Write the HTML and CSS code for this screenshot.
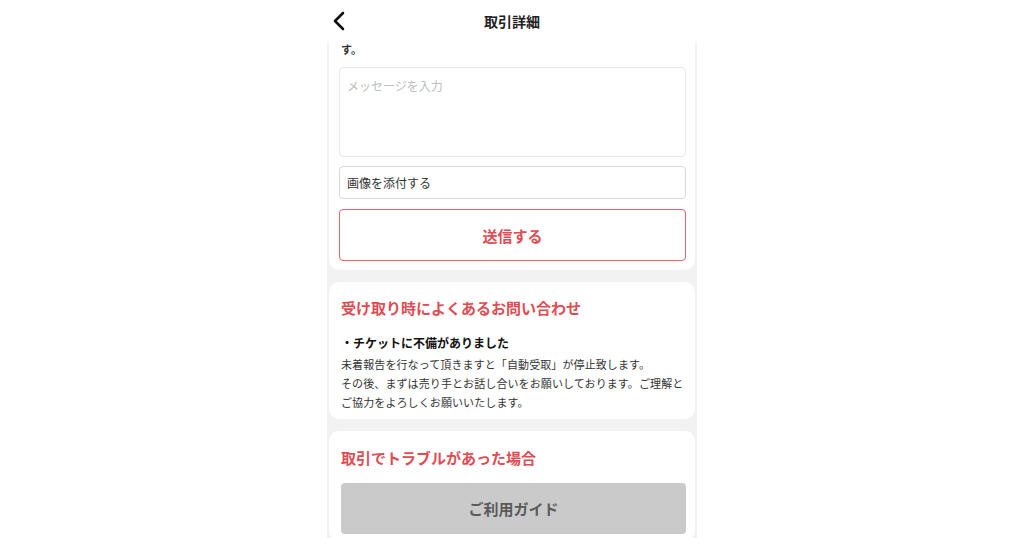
FILE: index.html
```html
<!DOCTYPE html>
<html lang="ja">
<head>
  <meta charset="UTF-8">
  <meta name="viewport" content="width=device-width, initial-scale=1">
  <title>取引詳細</title>
  <link rel="stylesheet" href="styles.css">
</head>
<body>

<div class="screen">
  <div class="header">
    <button type="button" class="back" aria-label="戻る">
      <svg width="14" height="20" viewBox="0 0 14 20"><path d="M11 2 L3 10 L11 18" fill="none" stroke="#111" stroke-width="2.6" stroke-linecap="round" stroke-linejoin="round"/></svg>
    </button>
    <h1>取引詳細</h1>
    <span></span>
  </div>

  <div class="content">
    <div class="card card-top">
      <p class="cut">す。</p>
      <textarea class="message" placeholder="メッセージを入力"></textarea>
      <div class="attach">画像を添付する</div>
      <button type="button" class="send">送信する</button>
    </div>

    <div class="card">
      <h2>受け取り時によくあるお問い合わせ</h2>
      <p class="item">・チケットに不備がありました</p>
      <p class="body">未着報告を行なって頂きますと「自動受取」が停止致します。<br>その後、まずは売り手とお話し合いをお願いしております。ご理解とご協力をよろしくお願いいたします。</p>
    </div>

    <div class="card">
      <h2 class="trouble">取引でトラブルがあった場合</h2>
      <button type="button" class="guide">ご利用ガイド</button>
    </div>
  </div>
</div>

</body>
</html>
```

FILE: styles.css
```css
body {
  margin: 0;
  background: #fff;
  font-family: "Noto Sans CJK JP", "Noto Sans", sans-serif;
  color: #222;
  overflow: hidden;
}
.screen {
  width: 370px;
  margin: 0 auto;
  height: 538px;
  display: flex;
  flex-direction: column;
}
.header {
  height: 42px;
  flex: none;
  display: grid;
  grid-template-columns: 40px 1fr 40px;
  align-items: center;
  background: #fff;
}
.back {
  border: none;
  background: none;
  padding: 0 0 0 5px;
  margin-top: -1px;
  height: 20px;
  display: flex;
  align-items: center;
  cursor: pointer;
}
.header h1 {
  margin: 0;
  text-align: center;
  font-size: 14px;
  font-weight: bold;
  color: #222;
  margin-top: -1px;
}
.content {
  flex: 1;
  background: #f2f2f2;
  padding: 0 2px;
  overflow: hidden;
}
.card {
  background: #fff;
  border-radius: 10px;
  padding: 16px 9px 7px 12px;
  margin-bottom: 12px;
}
.card-top {
  border-radius: 0 0 10px 10px;
  padding: 0 9px 9px 10px;
}
.cut {
  margin: 0 0 0 2px;
  font-size: 11px;
  line-height: 14px;
  font-weight: bold;
  color: #333;
}
.message {
  display: block;
  box-sizing: border-box;
  width: 100%;
  height: 90px;
  margin-top: 11px;
  padding: 9px 7px;
  border: 1px solid #e8e8e8;
  border-radius: 4px;
  font-family: inherit;
  font-size: 12px;
  resize: none;
  outline: none;
}
.message::placeholder {
  color: #bdbdbd;
}
.attach {
  box-sizing: border-box;
  height: 33px;
  margin-top: 9px;
  padding: 0 7px;
  border: 1px solid #d9d9d9;
  border-radius: 4px;
  display: flex;
  align-items: center;
  font-size: 12px;
  color: #333;
}
.send {
  display: block;
  width: 100%;
  height: 52px;
  margin-top: 10px;
  border: 1.5px solid #e3646a;
  border-radius: 4px;
  background: #fff;
  color: #e04c53;
  font-family: inherit;
  font-size: 15px;
  font-weight: bold;
  cursor: pointer;
}
h2 {
  margin: 0;
  font-size: 15px;
  line-height: 20px;
  font-weight: bold;
  color: #e04c53;
}
.item {
  margin: 16px 0 0;
  font-size: 12px;
  line-height: 18px;
  font-weight: bold;
  color: #111;
}
.body {
  margin: 3px 0 0;
  font-size: 11px;
  letter-spacing: 0.1px;
  line-height: 19px;
  color: #333;
}
.trouble {
  margin-top: 1px;
}
.guide {
  display: block;
  width: 100%;
  height: 51px;
  margin-top: 15px;
  border: none;
  border-radius: 4px;
  background: #cacaca;
  color: #5a5a5a;
  font-family: inherit;
  font-size: 15px;
  font-weight: bold;
  cursor: pointer;
}
```
